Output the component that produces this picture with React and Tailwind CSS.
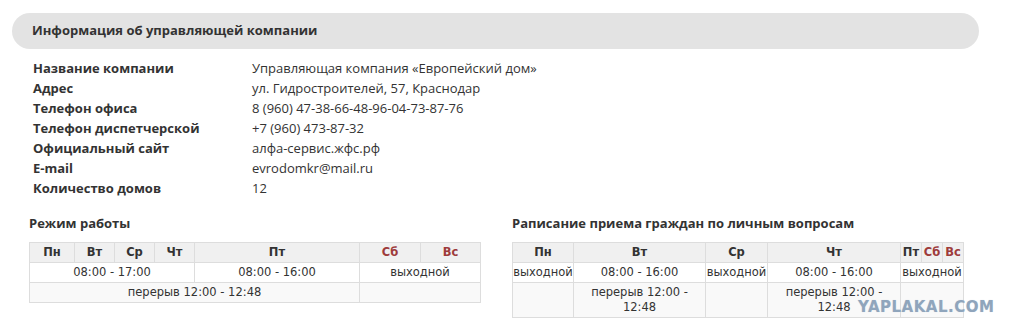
import React from "react";

const info = [
  ["Название компании", "Управляющая компания «Европейский дом»"],
  ["Адрес", "ул. Гидростроителей, 57, Краснодар"],
  ["Телефон офиса", "8 (960) 47-38-66-48-96-04-73-87-76"],
  ["Телефон диспетчерской", "+7 (960) 473-87-32"],
  ["Официальный сайт", "алфа-сервис.жфс.рф"],
  ["E-mail", "evrodomkr@mail.ru"],
  ["Количество домов", "12"],
];

const th = "border border-[#dddddd] bg-[#f0f0f0] font-bold text-center h-[20px] p-0";
const td = "border border-[#dddddd] text-center h-[20px] p-0 font-normal";
const red = "text-[#9e3b3b]";

const WorkTable = () => (
  <table className="border-collapse table-fixed w-[451px] text-[11.5px] leading-[15px] text-[#333] font-['DejaVu_Sans',sans-serif]">
    <thead>
      <tr>
        <th className={`${th} w-[45px]`}>Пн</th>
        <th className={`${th} w-[40px]`}>Вт</th>
        <th className={`${th} w-[40px]`}>Ср</th>
        <th className={`${th} w-[40px]`}>Чт</th>
        <th className={`${th} w-[165px]`}>Пт</th>
        <th className={`${th} w-[61px] ${red}`}>Сб</th>
        <th className={`${th} w-[60px] ${red}`}>Вс</th>
      </tr>
    </thead>
    <tbody>
      <tr>
        <td colSpan={4} className={`${td} bg-white`}>08:00 - 17:00</td>
        <td className={`${td} bg-white`}>08:00 - 16:00</td>
        <td colSpan={2} className={`${td} bg-white`}>выходной</td>
      </tr>
      <tr>
        <td colSpan={5} className={`${td} bg-[#f9f9f9]`}>перерыв 12:00 - 12:48</td>
        <td colSpan={2} className={`${td} bg-[#f9f9f9]`}></td>
      </tr>
    </tbody>
  </table>
);

const ReceptionTable = () => (
  <table className="border-collapse table-fixed w-[451px] text-[11.5px] leading-[15px] text-[#333] font-['DejaVu_Sans',sans-serif]">
    <thead>
      <tr>
        <th className={`${th} w-[61px]`}>Пн</th>
        <th className={`${th} w-[132px]`}>Вт</th>
        <th className={`${th} w-[62px]`}>Ср</th>
        <th className={`${th} w-[133px]`}>Чт</th>
        <th className={`${th} w-[21px]`}>Пт</th>
        <th className={`${th} w-[21px] ${red}`}>Сб</th>
        <th className={`${th} w-[21px] ${red}`}>Вс</th>
      </tr>
    </thead>
    <tbody>
      <tr>
        <td className={`${td} bg-white whitespace-nowrap`}>выходной</td>
        <td className={`${td} bg-white`}>08:00 - 16:00</td>
        <td className={`${td} bg-white whitespace-nowrap`}>выходной</td>
        <td className={`${td} bg-white`}>08:00 - 16:00</td>
        <td colSpan={3} className={`${td} bg-white whitespace-nowrap`}>выходной</td>
      </tr>
      <tr>
        <td className={`${td} bg-[#f9f9f9]`}></td>
        <td className={`${td} bg-[#f9f9f9] px-[8px] py-[2px]`}>перерыв 12:00 - 12:48</td>
        <td className={`${td} bg-[#f9f9f9]`}></td>
        <td className={`${td} bg-[#f9f9f9] px-[8px] py-[2px]`}>перерыв 12:00 - 12:48</td>
        <td colSpan={3} className={`${td} bg-[#f9f9f9]`}></td>
      </tr>
    </tbody>
  </table>
);

export default function App() {
  return (
    <div className="relative w-[1020px] h-[336px] bg-white overflow-hidden font-['Open_Sans',sans-serif] text-[13px] text-[#333]">
      <div className="pt-[13px] pl-[12px] w-[979px]">
        <div className="h-[36px] rounded-[18px] bg-[#e3e3e3] flex items-center pl-[20px]">
          <h2 className="font-bold text-[13px] text-[#333]">Информация об управляющей компании</h2>
        </div>
      </div>

      <div className="mt-[9px] pl-[33px] flex flex-col">
        {info.map(([label, value]) => (
          <div key={label} className="flex h-[20px] items-center leading-[20px]">
            <span className="w-[219px] font-bold">{label}</span>
            <span>{value}</span>
          </div>
        ))}
      </div>

      <div className="mt-[16px] pl-[29px] flex gap-[31px]">
        <div className="flex flex-col">
          <h3 className="font-bold text-[13px] leading-[18px] h-[18px] mb-[10px]">Режим работы</h3>
          <WorkTable />
        </div>
        <div className="flex flex-col">
          <h3 className="font-bold text-[13px] leading-[18px] h-[18px] mb-[10px]">Рaписание приема граждан по личным вопросам</h3>
          <ReceptionTable />
        </div>
      </div>

      <div className="absolute left-[858px] top-[298px] font-['DejaVu_Sans',sans-serif] font-bold text-[15px] leading-[18px] tracking-[0.5px] text-[#8fa5bc] [text-shadow:0_0_1px_#cfd8e2]">
        YAPLAKAL.COM
      </div>
    </div>
  );
}
